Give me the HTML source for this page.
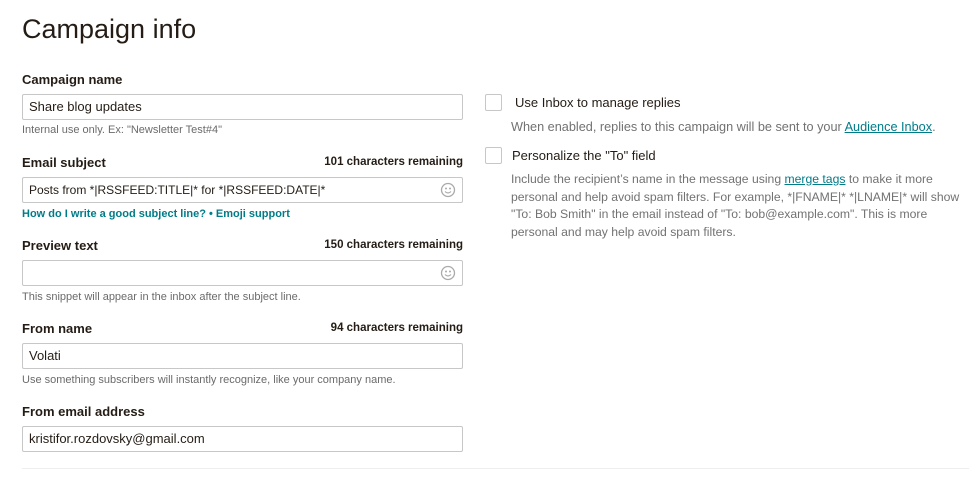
<!DOCTYPE html><html><head><style>
body{margin:0;width:969px;height:479px;background:#fff;font-family:"Liberation Sans",sans-serif;position:relative;overflow:hidden;color:#241c15}
.a{position:absolute;white-space:nowrap}
h1{position:absolute;left:22px;top:14px;margin:0;font-weight:normal;font-size:27px;color:#241c15}
.lab{font-size:13px;font-weight:bold;color:#241c15;left:22px}
.rem{font-size:11.5px;font-weight:bold;right:506px}
.inp{position:absolute;left:22px;height:24px;border:1px solid #c7c7c7;border-radius:2px;font-size:13px;line-height:24px;padding-left:6px;box-sizing:content-box;width:433px}
.help{font-size:11px;color:#6b6b6b;left:22px}
.emo{position:absolute;right:6px;top:4px;width:16px;height:16px}
.cb{position:absolute;width:17px;height:17px;border:1px solid #c7c7c7;border-radius:2px;box-sizing:border-box}
.d{font-size:12.5px;color:#727272;left:511px;line-height:17.7px}
a{color:#007c89;text-decoration:underline}
</style></head><body>
<h1>Campaign info</h1>
<div class="a lab" style="top:72px">Campaign name</div>
<div class="inp" style="top:94px">Share blog updates</div>
<div class="a help" style="top:124px">Internal use only. Ex: "Newsletter Test#4"</div>
<div class="a lab" style="top:155px">Email subject</div>
<div class="a rem" style="top:156px">101 characters remaining</div>
<div class="inp" style="top:177px;font-size:12px">Posts from *|RSSFEED:TITLE|* for *|RSSFEED:DATE|*<svg class="emo" viewBox="0 0 16 16"><circle cx="8" cy="8" r="6.5" fill="none" stroke="#aaa" stroke-width="1.3"/><circle cx="6" cy="6.5" r="1" fill="#aaa"/><circle cx="10" cy="6.5" r="1" fill="#aaa"/><path d="M5 9.5Q8 12.5 11 9.5" fill="none" stroke="#aaa" stroke-width="1.2"/></svg></div>
<div class="a" style="left:22px;top:208px;font-size:11px;font-weight:bold;color:#007c89">How do I write a good subject line? • Emoji support</div>
<div class="a lab" style="top:238px">Preview text</div>
<div class="a rem" style="top:239px">150 characters remaining</div>
<div class="inp" style="top:260px"><svg class="emo" viewBox="0 0 16 16"><circle cx="8" cy="8" r="6.5" fill="none" stroke="#aaa" stroke-width="1.3"/><circle cx="6" cy="6.5" r="1" fill="#aaa"/><circle cx="10" cy="6.5" r="1" fill="#aaa"/><path d="M5 9.5Q8 12.5 11 9.5" fill="none" stroke="#aaa" stroke-width="1.2"/></svg></div>
<div class="a help" style="top:291px">This snippet will appear in the inbox after the subject line.</div>
<div class="a lab" style="top:321px">From name</div>
<div class="a rem" style="top:322px">94 characters remaining</div>
<div class="inp" style="top:343px">Volati</div>
<div class="a help" style="top:374px">Use something subscribers will instantly recognize, like your company name.</div>
<div class="a lab" style="top:404px">From email address</div>
<div class="inp" style="top:426px">kristifor.rozdovsky@gmail.com</div>
<div style="position:absolute;left:22px;top:468px;width:947px;height:1px;background:#eee"></div>
<div class="cb" style="left:485px;top:94px"></div>
<div class="a" style="left:515px;top:95px;font-size:13px">Use Inbox to manage replies</div>
<div class="a d" style="top:119px;font-size:12.7px">When enabled, replies to this campaign will be sent to your <a>Audience Inbox</a>.</div>
<div class="cb" style="left:485px;top:147px"></div>
<div class="a" style="left:512px;top:148px;font-size:13px">Personalize the "To" field</div>
<div class="a d" style="top:171px;font-size:12.2px">Include the recipient’s name in the message using <a>merge tags</a> to make it more<br>personal and help avoid spam filters. For example, *|FNAME|* *|LNAME|* will show<br>"To: Bob Smith" in the email instead of "To: bob@example.com". This is more<br>personal and may help avoid spam filters.</div>
</body></html>
